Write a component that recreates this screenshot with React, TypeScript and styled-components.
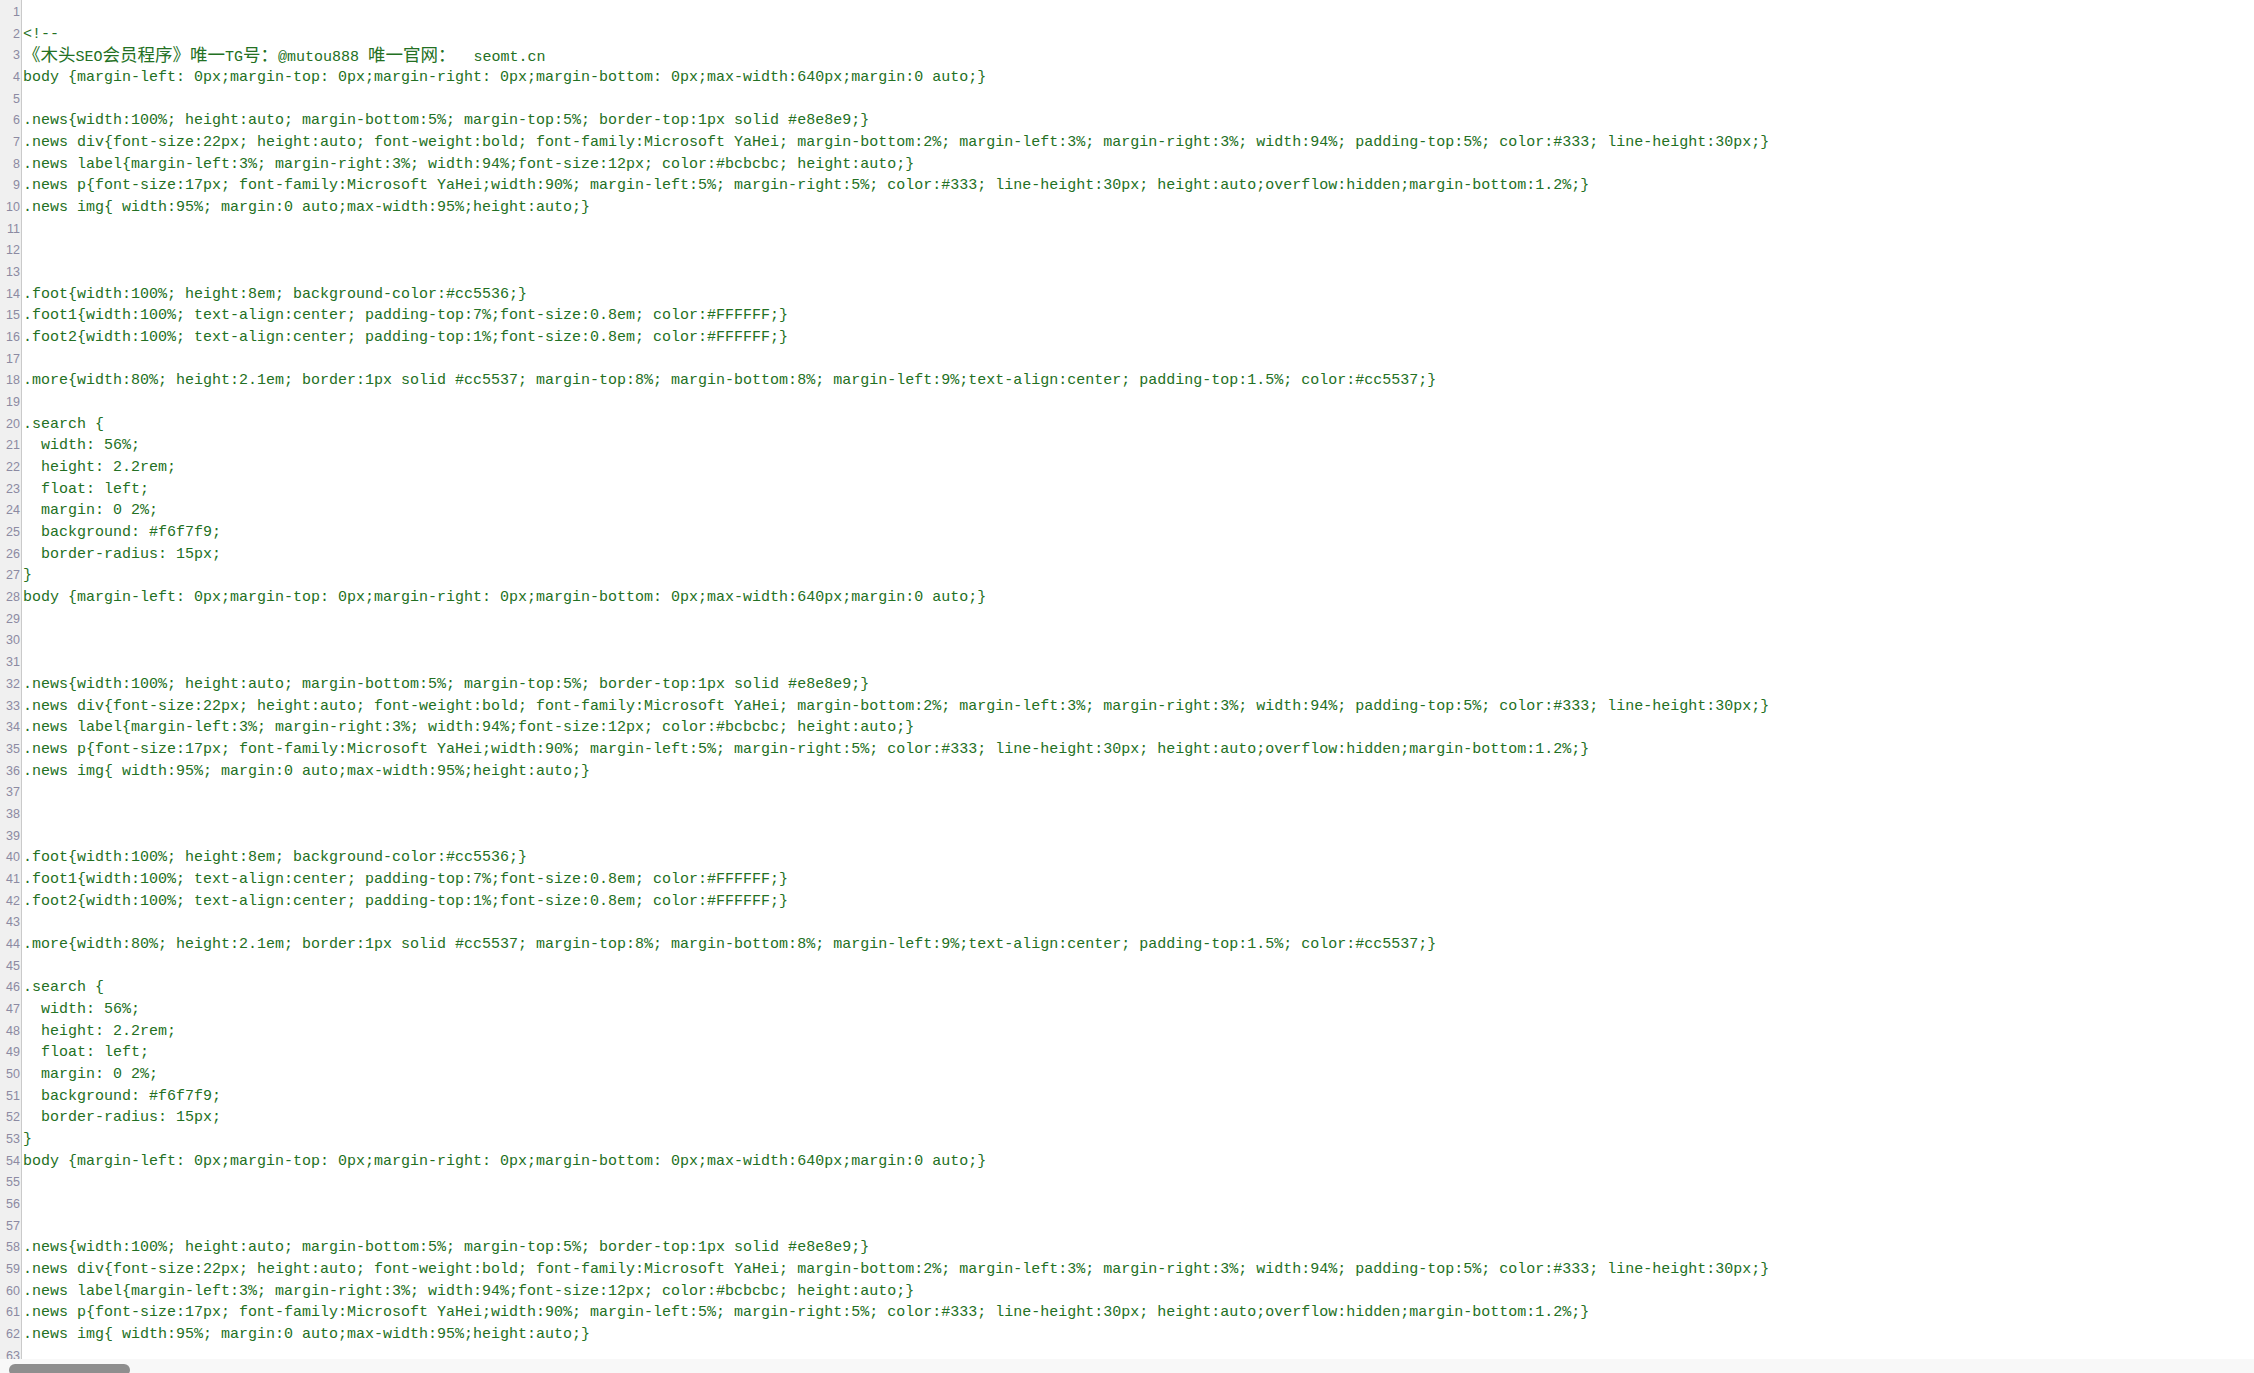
import React from "react";
import styled, { createGlobalStyle } from "styled-components";

const GlobalStyle = createGlobalStyle`
  html, body {
    margin: 0;
    padding: 0;
    height: 100%;
    overflow: hidden;
    background: #ffffff;
  }
  #root { height: 100%; }
`;

const LINE_H = "21.68px";

const Page = styled.div`
  display: flex;
  flex-direction: column;
  height: 100vh;
  background: #ffffff;
`;

const Editor = styled.div`
  flex: 1;
  min-height: 0;
  display: flex;
  overflow: hidden;
`;

const Gutter = styled.div`
  flex-shrink: 0;
  width: 21px;
  padding-top: 2px;
  background: #f0f0f0;
  border-right: 1px solid #cacaca;
  font-family: "Liberation Sans", Arial, sans-serif;
  font-size: 12.5px;
  color: #8c8aa2;
`;

const LineNo = styled.div`
  height: ${LINE_H};
  line-height: ${LINE_H};
  text-align: right;
  padding-right: 1px;
  white-space: nowrap;
`;

const Code = styled.div`
  flex: 1;
  min-width: 0;
  padding-top: 2px;
  padding-left: 1px;
  font-family: "Liberation Mono", "Courier New", monospace;
  font-size: 15px;
  color: #237023;
  white-space: pre;
`;

const Line = styled.div`
  height: ${LINE_H};
  line-height: ${LINE_H};
`;

const Cjk = styled.span`
  font-family: "Noto Sans CJK SC", "Noto Sans CJK JP", sans-serif;
  font-size: 17.5px;
  line-height: 1;
`;

const HScroll = styled.div`
  flex-shrink: 0;
  height: 14px;
  display: flex;
  overflow: hidden;
  background: #f8f8f8;
`;

const Thumb = styled.div`
  width: 121px;
  height: 12px;
  margin: 5px 0 0 9px;
  border-radius: 6px;
  background: #8e8e8e;
`;

const body =
  "body {margin-left: 0px;margin-top: 0px;margin-right: 0px;margin-bottom: 0px;max-width:640px;margin:0 auto;}";

const news = [
  ".news{width:100%; height:auto; margin-bottom:5%; margin-top:5%; border-top:1px solid #e8e8e9;}",
  ".news div{font-size:22px; height:auto; font-weight:bold; font-family:Microsoft YaHei; margin-bottom:2%; margin-left:3%; margin-right:3%; width:94%; padding-top:5%; color:#333; line-height:30px;}",
  ".news label{margin-left:3%; margin-right:3%; width:94%;font-size:12px; color:#bcbcbc; height:auto;}",
  ".news p{font-size:17px; font-family:Microsoft YaHei;width:90%; margin-left:5%; margin-right:5%; color:#333; line-height:30px; height:auto;overflow:hidden;margin-bottom:1.2%;}",
  ".news img{ width:95%; margin:0 auto;max-width:95%;height:auto;}",
];

const tail = [
  "",
  "",
  "",
  ".foot{width:100%; height:8em; background-color:#cc5536;}",
  ".foot1{width:100%; text-align:center; padding-top:7%;font-size:0.8em; color:#FFFFFF;}",
  ".foot2{width:100%; text-align:center; padding-top:1%;font-size:0.8em; color:#FFFFFF;}",
  "",
  ".more{width:80%; height:2.1em; border:1px solid #cc5537; margin-top:8%; margin-bottom:8%; margin-left:9%;text-align:center; padding-top:1.5%; color:#cc5537;}",
  "",
  ".search {",
  "  width: 56%;",
  "  height: 2.2rem;",
  "  float: left;",
  "  margin: 0 2%;",
  "  background: #f6f7f9;",
  "  border-radius: 15px;",
  "}",
];

const lines: string[] = [
  "",
  "<!--",
  "《木头SEO会员程序》唯一TG号：@mutou888 唯一官网：  seomt.cn",
  body,
  "",
  ...news,
  ...tail,
  body,
  "",
  "",
  "",
  ...news,
  ...tail,
  body,
  "",
  "",
  "",
  ...news,
  "",
  "",
];

const CJK_RE = /([\u3000-\u303f\u3400-\u9fff\uff00-\uffef]+)/;

function renderText(text: string) {
  if (!CJK_RE.test(text)) return text;
  return text.split(CJK_RE).map((part, i) =>
    i % 2 === 1 ? <Cjk key={i}>{part}</Cjk> : <React.Fragment key={i}>{part}</React.Fragment>
  );
}

export default function App() {
  return (
    <>
      <GlobalStyle />
      <Page>
        <Editor>
          <Gutter>
            {lines.map((_, i) => (
              <LineNo key={i}>{i + 1}</LineNo>
            ))}
          </Gutter>
          <Code>
            {lines.map((l, i) => (
              <Line key={i}>{l === "" ? " " : renderText(l)}</Line>
            ))}
          </Code>
        </Editor>
        <HScroll>
          <Thumb />
        </HScroll>
      </Page>
    </>
  );
}
